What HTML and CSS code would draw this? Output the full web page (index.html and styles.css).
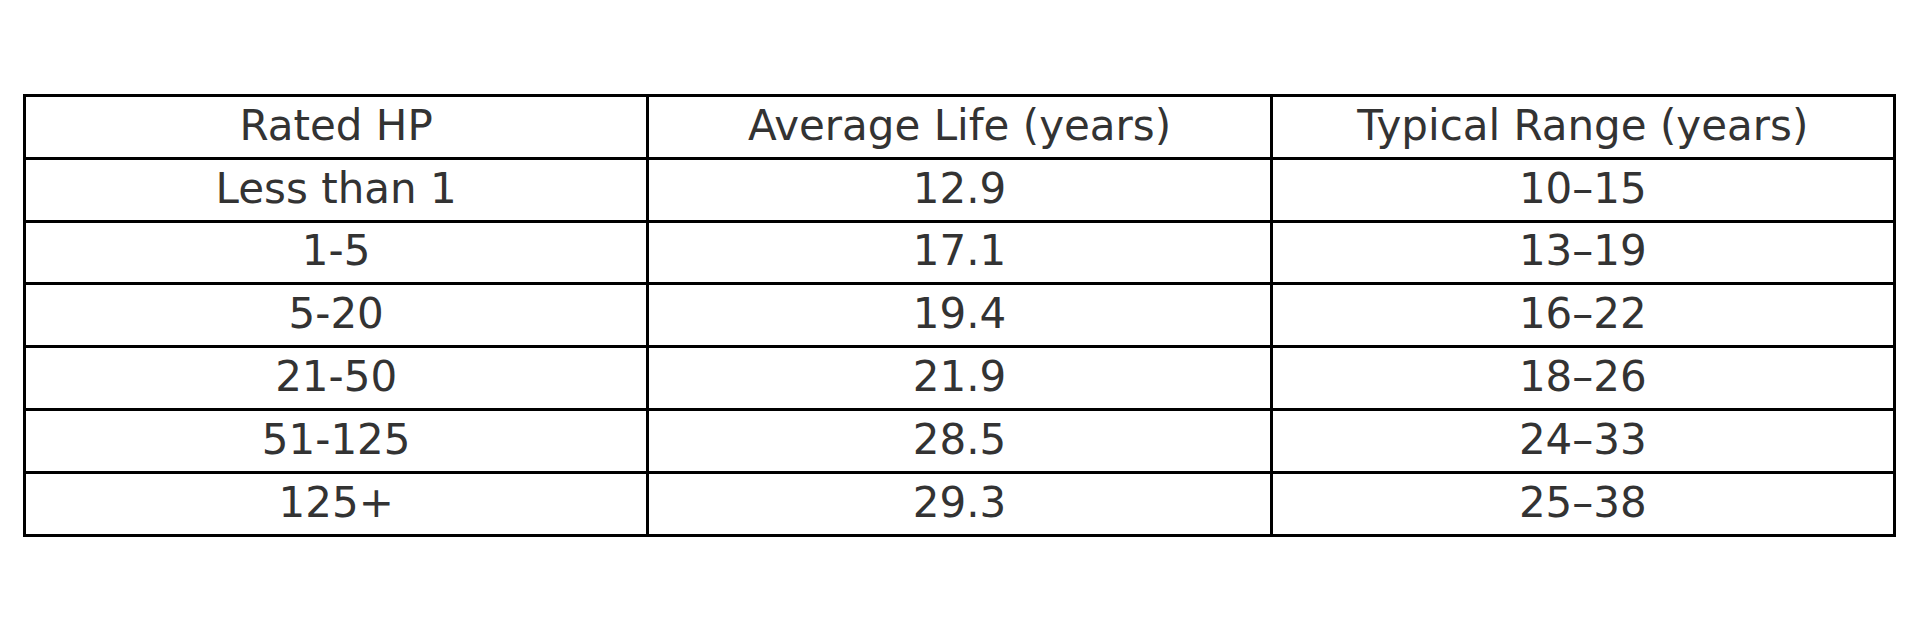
FILE: index.html
```html
<!DOCTYPE html>
<html>
<head>
<meta charset="utf-8">
<link rel="stylesheet" href="styles.css">
</head>
<body>
<table class="data">
  <tr><td>Rated HP</td><td>Average Life (years)</td><td>Typical Range (years)</td></tr>
  <tr><td>Less than 1</td><td>12.9</td><td>10–15</td></tr>
  <tr><td>1-5</td><td>17.1</td><td>13–19</td></tr>
  <tr><td>5-20</td><td>19.4</td><td>16–22</td></tr>
  <tr><td>21-50</td><td>21.9</td><td>18–26</td></tr>
  <tr><td>51-125</td><td>28.5</td><td>24–33</td></tr>
  <tr><td>125+</td><td>29.3</td><td>25–38</td></tr>
</table>
</body>
</html>
```

FILE: styles.css
```css
html, body {
  margin: 0;
  padding: 0;
  background: #fff;
}
body {
  padding-top: 94px;
  padding-left: 23px;
}
.data {
  border-collapse: collapse;
  width: 1873px;
  table-layout: fixed;
  font-family: "DejaVu Sans", sans-serif;
  font-size: 42px;
  color: #333;
}
.data tr {
  height: 62.8px;
}
.data td {
  border: 3px solid #000;
  padding: 0 0 2px 0;
  text-align: center;
  vertical-align: middle;
  line-height: 1;
}
```
